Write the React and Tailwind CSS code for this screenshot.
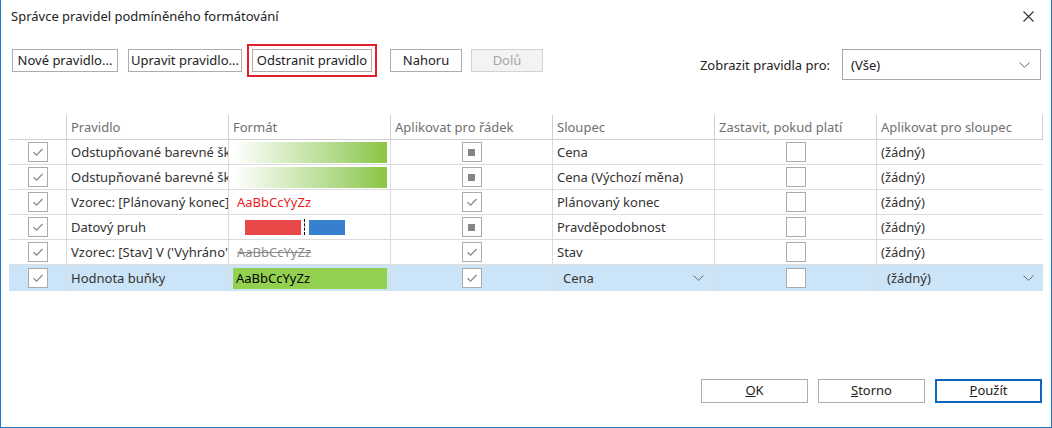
import React from 'react';

const rows = [
  { rule: 'Odstupňované barevné škály', fmt: 'gradient', row: 'ind', col: 'Cena', apply: '(žádný)' },
  { rule: 'Odstupňované barevné škály', fmt: 'gradient', row: 'ind', col: 'Cena (Výchozí měna)', apply: '(žádný)' },
  { rule: 'Vzorec: [Plánovaný konec]', fmt: 'red', row: 'check', col: 'Plánovaný konec', apply: '(žádný)' },
  { rule: 'Datový pruh', fmt: 'bar', row: 'ind', col: 'Pravděpodobnost', apply: '(žádný)' },
  { rule: "Vzorec: [Stav] V ('Vyhráno')", fmt: 'strike', row: 'check', col: 'Stav', apply: '(žádný)' },
  { rule: 'Hodnota buňky', fmt: 'green', row: 'check', col: 'Cena', apply: '(žádný)', selected: true },
];

const Check = () => (
  <svg width="12" height="10" viewBox="0 0 12 10">
    <path d="M1.5 5.2 L4.6 8.2 L10.5 2" fill="none" stroke="#8a8a8a" strokeWidth="1.3" />
  </svg>
);

const Box = ({ state }) => (
  <div className="w-[20px] h-[20px] border border-[#ababab] bg-white flex items-center justify-center">
    {state === 'check' && <Check />}
    {state === 'ind' && <div className="w-[7px] h-[7px] bg-[#858585]" />}
  </div>
);

const Chevron = () => (
  <svg width="11" height="6" viewBox="0 0 11 6">
    <path d="M0.5 0.5 L5.5 5.3 L10.5 0.5" fill="none" stroke="#6a6a6a" strokeWidth="1" />
  </svg>
);

const Btn = ({ children, className = '' }) => (
  <div className={`h-[23px] border border-[#adadad] bg-white flex items-center justify-center text-[#222] whitespace-nowrap ${className}`}>
    {children}
  </div>
);

function Format({ kind }) {
  if (kind === 'gradient')
    return <div className="ml-[4px] w-[154px] h-[21px] bg-linear-to-r from-white to-[#8bc53f]" />;
  if (kind === 'red') return <span className="ml-[8px] pt-[2px] text-[#ee1b24]">AaBbCcYyZz</span>;
  if (kind === 'strike') return <span className="ml-[8px] pt-[2px] text-[#8a8a8a] line-through">AaBbCcYyZz</span>;
  if (kind === 'bar')
    return (
      <div className="ml-[16px] flex items-center">
        <div className="w-[56px] h-[15px] bg-[#ea4848]" />
        <div className="ml-[3px] h-[16px] border-l border-dashed border-black" />
        <div className="ml-[4px] w-[36px] h-[15px] bg-[#3780d0]" />
      </div>
    );
  return (
    <div className="ml-[4px] w-[154px] h-[21px] bg-[#92d050] flex items-center pl-[3px] pt-[2px] text-black">AaBbCcYyZz</div>
  );
}

export default function App() {
  const cols = 'grid grid-cols-[57px_162px_162px_162px_162px_162px_167px]';
  return (
    <div className="w-[1052px] h-[428px] bg-white border-x border-b border-[#1b78c8] flex flex-col font-['Noto_Sans',sans-serif] text-[13px] text-[#333]">
      {/* title bar */}
      <div className="h-[32px] flex items-center justify-between pl-[10px] pr-[17px]">
        <span className="text-[#222] pt-[2px]">Správce pravidel podmíněného formátování</span>
        <svg width="11" height="11" viewBox="0 0 11 11">
          <path d="M0.5 0.5 L10.5 10.5 M10.5 0.5 L0.5 10.5" stroke="#333" strokeWidth="1.1" />
        </svg>
      </div>

      {/* toolbar */}
      <div className="mt-[12px] flex items-start pl-[11px] pr-[10px]">
        <Btn className="mt-[5px] w-[106px]">Nové pravidlo...</Btn>
        <Btn className="mt-[5px] ml-[10px] w-[114px]">Upravit pravidlo...</Btn>
        <div className="ml-[5px] border-2 border-[#e0202a] p-[3px]">
          <Btn className="w-[120px]">Odstranit pravidlo</Btn>
        </div>
        <Btn className="mt-[5px] ml-[13px] w-[72px]">Nahoru</Btn>
        <div className="mt-[5px] ml-[9px] w-[72px] h-[23px] border border-[#d2d2d2] bg-[#f3f3f3] flex items-center justify-center text-[#a6a6a6]">
          Dolů
        </div>
        <div className="flex-1" />
        <div className="mt-[5px] flex items-center h-[31px]">
          <span className="text-[#222] mr-[12px] pt-[2px]">Zobrazit pravidla pro:</span>
          <div className="w-[199px] h-[31px] border border-[#a8a8a8] flex items-center justify-between pl-[8px] pr-[10px] text-[#222]">
            <span className="pt-[2px]">(Vše)</span>
            <Chevron />
          </div>
        </div>
      </div>

      {/* table */}
      <div className="mt-[35px] ml-[8px] w-[1034px]">
        <div className={`${cols} h-[25px] border-b border-[#cfcfcf] text-[#6f6f6f]`}>
          <div />
          {['Pravidlo', 'Formát', 'Aplikovat pro řádek', 'Sloupec', 'Zastavit, pokud platí', 'Aplikovat pro sloupec'].map((h, i) => (
            <div key={h} className={`border-l border-[#cfcfcf] flex items-center pl-[4px] pt-[2px] ${i === 5 ? 'border-r' : ''}`}>
              {h}
            </div>
          ))}
        </div>
        {rows.map((r, i) => (
          <div
            key={i}
            className={`${cols} ${i < rows.length - 1 ? 'h-[25px] border-b' : 'h-[26px]'} border-[#dcdcdc] ${r.selected ? 'bg-[#cce4f7]' : ''}`}
          >
            <div className="flex items-center justify-center">
              <Box state="check" />
            </div>
            <div className="border-l border-[#dcdcdc] flex items-center pl-[4px] pt-[2px] overflow-hidden whitespace-nowrap">
              <span className="block overflow-hidden">{r.rule}</span>
            </div>
            <div className="border-l border-[#dcdcdc] flex items-center overflow-hidden whitespace-nowrap">
              <Format kind={r.fmt} />
            </div>
            <div className="border-l border-[#dcdcdc] flex items-center justify-center">
              <Box state={r.row} />
            </div>
            <div className={`border-l border-[#dcdcdc] flex items-center justify-between ${r.selected ? 'pl-[10px] pr-[10px]' : 'pl-[4px]'}`}>
              <span className="pt-[2px]">{r.col}</span>
              {r.selected && <Chevron />}
            </div>
            <div className="border-l border-[#dcdcdc] flex items-center justify-center">
              <Box state="none" />
            </div>
            <div className={`border-l border-[#dcdcdc] flex items-center justify-between ${r.selected ? 'pl-[10px] pr-[9px]' : 'pl-[4px]'}`}>
              <span className="pt-[2px]">{r.apply}</span>
              {r.selected && <Chevron />}
            </div>
          </div>
        ))}
      </div>

      <div className="flex-1" />

      {/* footer buttons */}
      <div className="flex justify-end pr-[9px] pb-[24px]">
        <Btn className="w-[107px] h-[24px]">
          <span><span className="underline">O</span>K</span>
        </Btn>
        <Btn className="ml-[10px] w-[107px] h-[24px]">
          <span><span className="underline">S</span>torno</span>
        </Btn>
        <div className="ml-[10px] w-[107px] h-[24px] border-2 border-[#1066bb] flex items-center justify-center text-[#222]">
          <span><span className="underline">P</span>oužít</span>
        </div>
      </div>
    </div>
  );
}
